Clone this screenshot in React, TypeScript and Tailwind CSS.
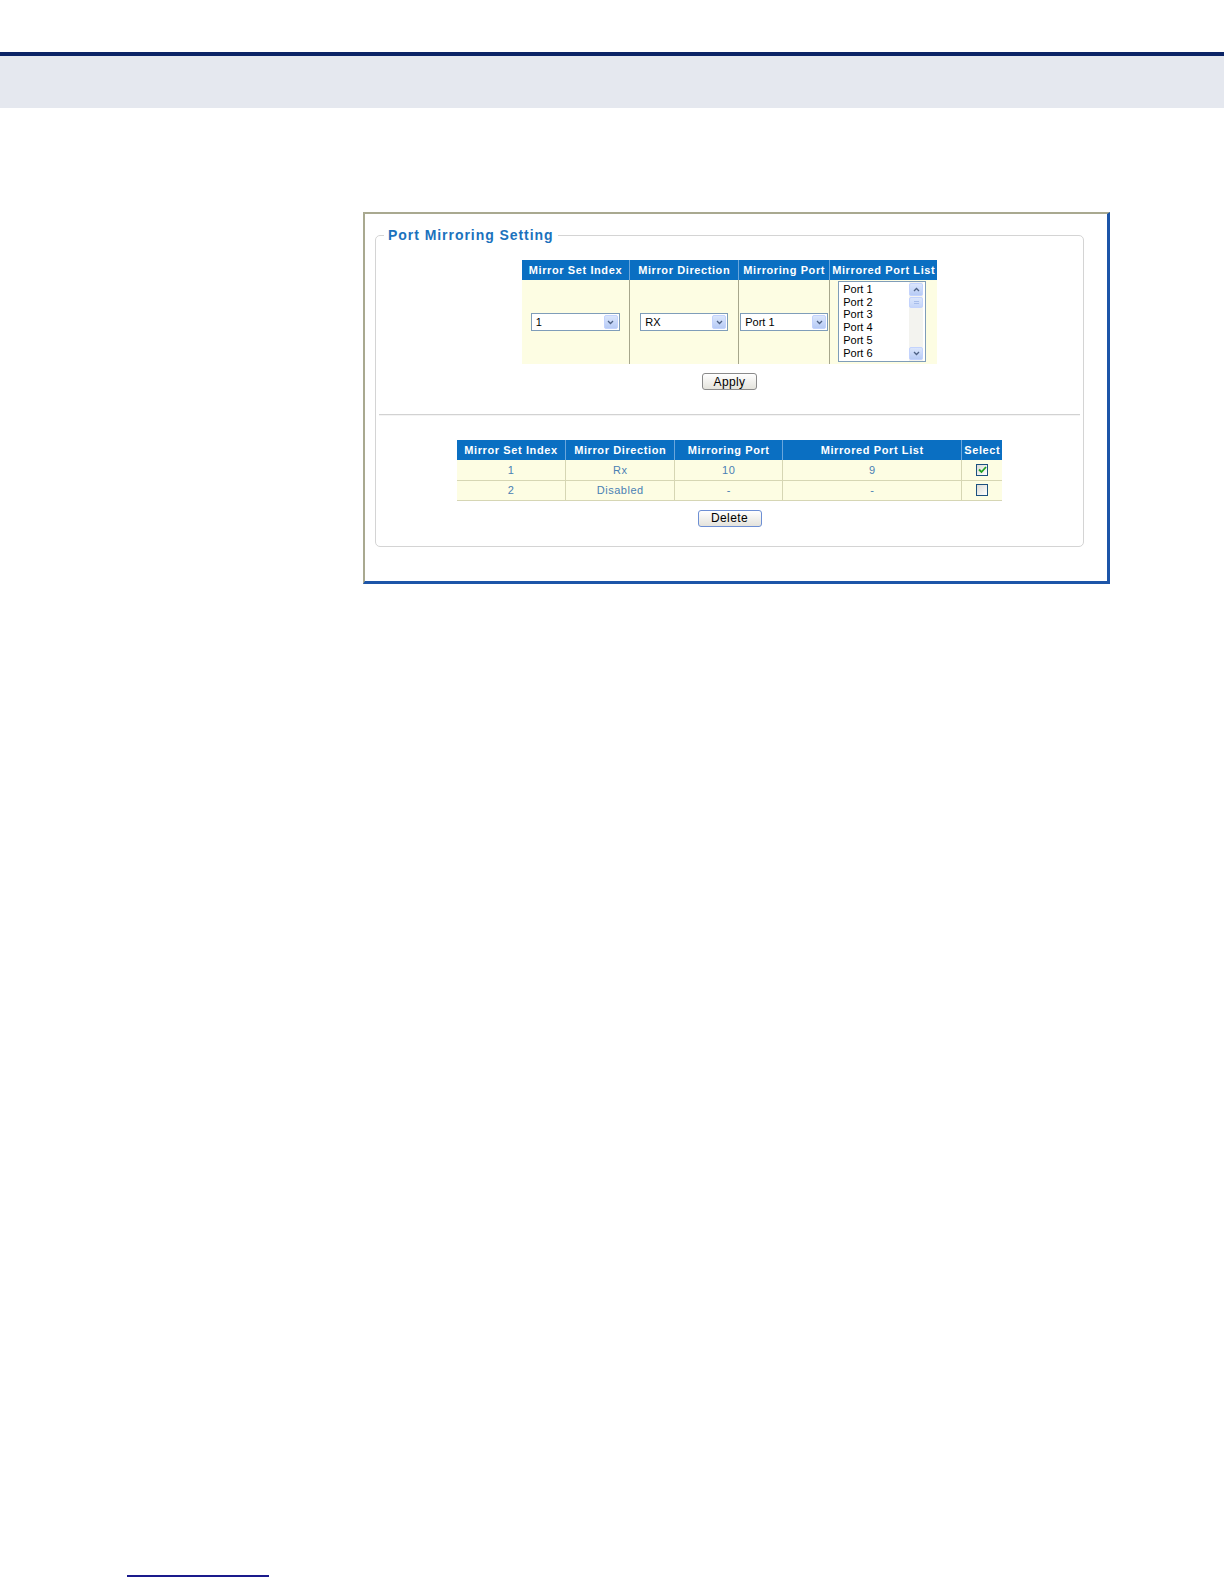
const font = { fontFamily: '"Liberation Sans", Arial, sans-serif' };

function Chevron() {
  return (
    <svg width="7" height="5" viewBox="0 0 7 5">
      <path d="M1 1 L3.5 3.5 L6 1" fill="none" stroke="#4d6185" strokeWidth="1.3" />
    </svg>
  );
}

function Select({ value, width }: { value: string; width: string }) {
  return (
    <div className={`${width} h-[18px] bg-white border border-[#7f9db9] flex items-center justify-between pl-[4px] pr-[1px]`}>
      <span className="text-[11px] text-black leading-none">{value}</span>
      <div className="w-[14px] h-[14px] rounded-[2px] bg-gradient-to-b from-[#dbe6fc] to-[#b7cbf5] border border-[#c3d3fd] flex items-center justify-center">
        <Chevron />
      </div>
    </div>
  );
}

function ListBox() {
  const ports = ["Port 1", "Port 2", "Port 3", "Port 4", "Port 5", "Port 6"];
  return (
    <div className="w-[88px] h-[81px] bg-white border border-[#7f9db9] flex">
      <div className="flex-1 pl-[4px] pt-[1px]">
        {ports.map((p) => (
          <div key={p} className="text-[11px] leading-[12.7px] text-black">{p}</div>
        ))}
      </div>
      <div className="w-[14px] bg-[#f3f3ef] flex flex-col justify-between py-[1px] mr-[2px]">
        <div>
          <div className="h-[13px] rounded-[2px] bg-gradient-to-b from-[#dbe6fc] to-[#b7cbf5] border border-[#c3d3fd] flex items-center justify-center">
            <svg width="7" height="5" viewBox="0 0 7 5">
              <path d="M1 4 L3.5 1.5 L6 4" fill="none" stroke="#4d6185" strokeWidth="1.3" />
            </svg>
          </div>
          <div className="h-[11px] mt-[1px] rounded-[2px] bg-gradient-to-b from-[#dbe6fc] to-[#c4d5f8] border border-[#c3d3fd] flex flex-col items-center justify-center gap-[1px]">
            <div className="w-[5px] h-px bg-[#a7bdea]" />
            <div className="w-[5px] h-px bg-[#a7bdea]" />
          </div>
        </div>
        <div className="h-[13px] rounded-[2px] bg-gradient-to-b from-[#dbe6fc] to-[#b7cbf5] border border-[#c3d3fd] flex items-center justify-center">
          <Chevron />
        </div>
      </div>
    </div>
  );
}

function Checkbox({ checked }: { checked?: boolean }) {
  return (
    <div className="w-[12px] h-[12px] border border-[#1c5180] bg-gradient-to-br from-[#dcdcd7] to-white flex items-center justify-center">
      {checked && (
        <svg width="9" height="8" viewBox="0 0 9 8">
          <path d="M1 3.5 L3.5 6 L8 1" fill="none" stroke="#21a121" strokeWidth="1.8" />
        </svg>
      )}
    </div>
  );
}

function Button({ label, width, focused }: { label: string; width: string; focused?: boolean }) {
  return (
    <div
      className={`${width} h-[17px] rounded-[3px] border ${focused ? "border-[#6d8fd4]" : "border-[#8a8a8a]"} bg-gradient-to-b from-white to-[#e4e3dc] flex items-center justify-center text-[12px] leading-none text-black tracking-[0.4px]`}
    >
      {label}
    </div>
  );
}

const headCell = "bg-[#0a6fc2] text-white text-[11px] font-bold tracking-[0.6px] h-[20px] px-[2px] text-center whitespace-nowrap";

export default function App() {
  const rows = [
    { idx: "1", dir: "Rx", port: "10", list: "9", checked: true },
    { idx: "2", dir: "Disabled", port: "-", list: "-", checked: false },
  ];

  return (
    <div className="w-[1224px] h-[1584px] bg-white relative overflow-hidden" style={font}>
      {/* page header band */}
      <div className="mt-[52px] border-t-4 border-[#0b2466] h-[56px] bg-[#e5e8ef]" />

      {/* screenshot frame */}
      <div className="ml-[363px] mt-[104px] w-[747px] h-[372px] border-t-2 border-l-2 border-[#a9a990] border-r-[3px] border-b-[3px] border-r-[#1d55a8] border-b-[#1d55a8] pt-[12px] pl-[10px] pr-[23px]">
        <fieldset className="border border-[#d4d4d4] rounded-[5px] pb-[21px] h-[321px]">
          <legend className="ml-[8px] px-[4px] text-[14px] leading-[18px] font-bold tracking-[0.95px] text-[#1b72bd]">
            Port Mirroring Setting
          </legend>

          <div className="flex flex-col items-center">
            <table className="mt-[16px] border-collapse">
              <thead>
                <tr>
                  <th className={`${headCell} w-[108px] border-r border-[#6aa6dc]`}>Mirror Set Index</th>
                  <th className={`${headCell} w-[109px] border-r border-[#6aa6dc]`}>Mirror Direction</th>
                  <th className={`${headCell} w-[91px] border-r border-[#6aa6dc]`}>Mirroring Port</th>
                  <th className={`${headCell} w-[107px]`}>Mirrored Port List</th>
                </tr>
              </thead>
              <tbody>
                <tr className="bg-[#fdfde3] h-[84px]">
                  <td className="border-r border-[#a6a68c] px-[9px]">
                    <Select value="1" width="w-[89px]" />
                  </td>
                  <td className="border-r border-[#a6a68c] px-[10px]">
                    <Select value="RX" width="w-[88px]" />
                  </td>
                  <td className="border-r border-[#a6a68c] px-[1px]">
                    <Select value="Port 1" width="w-[88px]" />
                  </td>
                  <td className="pl-[8px] align-top pt-[1px]">
                    <ListBox />
                  </td>
                </tr>
              </tbody>
            </table>

            <div className="mt-[9px]">
              <Button label="Apply" width="w-[55px]" />
            </div>
          </div>

          <div className="mx-[3px] mt-[24px] h-[2px] border-t border-[#d2d2d2] border-b border-b-[#f4f4f4]" />

          <div className="flex flex-col items-center">
            <table className="mt-[24px] border-collapse">
              <thead>
                <tr>
                  <th className={`${headCell} w-[109px] h-[18px] border-r border-[#6aa6dc]`}>Mirror Set Index</th>
                  <th className={`${headCell} w-[109px] h-[18px] border-r border-[#6aa6dc]`}>Mirror Direction</th>
                  <th className={`${headCell} w-[108px] h-[18px] border-r border-[#6aa6dc]`}>Mirroring Port</th>
                  <th className={`${headCell} w-[179px] h-[18px] border-r border-[#6aa6dc]`}>Mirrored Port List</th>
                  <th className={`${headCell} w-[40px] h-[18px]`}>Select</th>
                </tr>
              </thead>
              <tbody>
                {rows.map((r) => (
                  <tr key={r.idx} className="bg-[#fdfde3] h-[20px] text-[11px] text-[#4a80b3] tracking-[0.5px] text-center">
                    <td className="border-r border-b border-[#d6d6b4]">{r.idx}</td>
                    <td className="border-r border-b border-[#d6d6b4]">{r.dir}</td>
                    <td className="border-r border-b border-[#d6d6b4]">{r.port}</td>
                    <td className="border-r border-b border-[#d6d6b4]">{r.list}</td>
                    <td className="border-b border-[#d6d6b4]">
                      <div className="flex justify-center">
                        <Checkbox checked={r.checked} />
                      </div>
                    </td>
                  </tr>
                ))}
              </tbody>
            </table>

            <div className="mt-[9px]">
              <Button label="Delete" width="w-[64px]" focused />
            </div>
          </div>
        </fieldset>
      </div>

      {/* footnote rule */}
      <div className="ml-[127px] mt-[991px] w-[142px] h-[2px] bg-[#1a1a8c]" />
    </div>
  );
}
